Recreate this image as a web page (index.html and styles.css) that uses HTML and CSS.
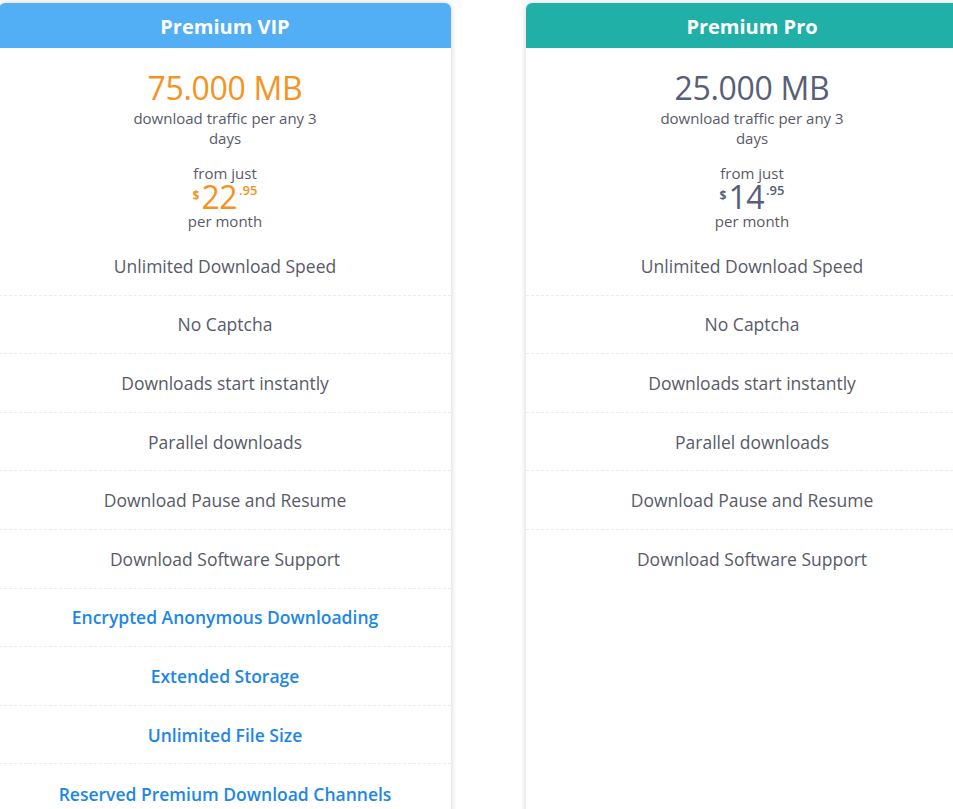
FILE: index.html
```html
<!DOCTYPE html>
<html>
<head>
<meta charset="utf-8">
<link rel="stylesheet" href="styles.css">
</head>
<body>
<div class="plans">
  <div class="plan plan-vip">
    <div class="plan-head">Premium VIP</div>
    <div class="plan-top">
      <div class="amount">75.000 MB</div>
      <div class="sub">download traffic per any 3<br>days</div>
      <div class="from">from just</div>
      <div class="price"><span class="cur">$</span><span class="int">22</span><span class="dec">.95</span></div>
      <div class="per">per month</div>
    </div>
    <ul class="features">
      <li>Unlimited Download Speed</li>
      <li>No Captcha</li>
      <li>Downloads start instantly</li>
      <li>Parallel downloads</li>
      <li>Download Pause and Resume</li>
      <li>Download Software Support</li>
      <li class="extra">Encrypted Anonymous Downloading</li>
      <li class="extra">Extended Storage</li>
      <li class="extra">Unlimited File Size</li>
      <li class="extra">Reserved Premium Download Channels</li>
    </ul>
  </div>
  <div class="plan plan-pro">
    <div class="plan-head">Premium Pro</div>
    <div class="plan-top">
      <div class="amount">25.000 MB</div>
      <div class="sub">download traffic per any 3<br>days</div>
      <div class="from">from just</div>
      <div class="price"><span class="cur">$</span><span class="int">14</span><span class="dec">.95</span></div>
      <div class="per">per month</div>
    </div>
    <ul class="features">
      <li>Unlimited Download Speed</li>
      <li>No Captcha</li>
      <li>Downloads start instantly</li>
      <li>Parallel downloads</li>
      <li>Download Pause and Resume</li>
      <li>Download Software Support</li>
    </ul>
  </div>
</div>
</body>
</html>
```

FILE: styles.css
```css
html, body {
  margin: 0;
  padding: 0;
  background: #ffffff;
  overflow: hidden;
}
body {
  font-family: "Open Sans", "Liberation Sans", sans-serif;
  color: #585a68;
  width: 953px;
  height: 809px;
}
.plans {
  display: flex;
  gap: 75px;
  margin-left: -1px;
  padding-top: 3px;
  width: 1100px;
  align-items: flex-start;
}
.plan {
  width: 452px;
  flex: 0 0 452px;
  background: #fff;
  border-radius: 6px 6px 0 0;
  box-shadow: 0 0 6px rgba(0, 0, 0, 0.18);
  min-height: 900px;
  text-align: center;
}
.plan-head {
  height: 45px;
  line-height: 48px;
  color: #fff;
  font-weight: 700;
  font-size: 20px;
  border-radius: 6px 6px 0 0;
}
.plan-vip .plan-head { background: #52aef5; }
.plan-pro .plan-head { background: #20b0a8; }
.plan-top {
  padding-top: 20px;
}
.amount {
  font-size: 32px;
  line-height: 40px;
  letter-spacing: -0.3px;
}
.plan-vip .amount, .plan-vip .price { color: #f7921e; }
.plan-pro .amount, .plan-pro .price { color: #575f78; }
.sub {
  font-size: 15px;
  line-height: 20px;
}
.from {
  margin-top: 15px;
  font-size: 15px;
  line-height: 20px;
}
.price {
  line-height: 28px;
  height: 28px;
  display: flex;
  justify-content: center;
  align-items: flex-start;
}
.price .cur {
  font-size: 12px;
  font-weight: 700;
  line-height: 14px;
  margin-top: 6px;
  margin-right: 2px;
}
.price .int {
  font-size: 32px;
  line-height: 28px;
  letter-spacing: -0.5px;
}
.price .dec {
  font-size: 13px;
  font-weight: 600;
  line-height: 14px;
  margin-left: 2px;
}
.per {
  font-size: 15px;
  line-height: 20px;
}
.features {
  list-style: none;
  margin: 6px 0 0 0;
  padding: 0;
}
.features li {
  height: 58.6px;
  box-sizing: border-box;
  display: flex;
  align-items: center;
  justify-content: center;
  font-size: 17.5px;
  border-bottom: 1px dashed #ececec;
}
.features li:last-child {
  border-bottom: none;
}
.features li.extra {
  color: #1e87e4;
  font-weight: 600;
}
```
